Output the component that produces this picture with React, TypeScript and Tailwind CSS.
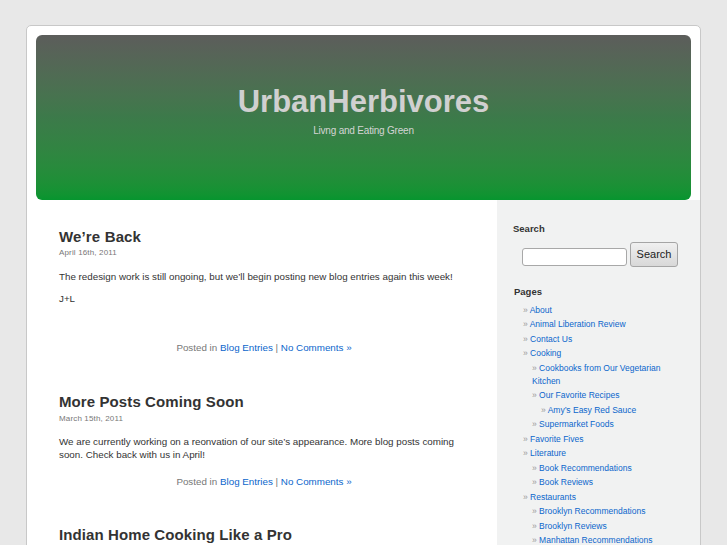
import React from "react";

type PageItem = { label: string; children?: PageItem[] };

const pages: PageItem[] = [
  { label: "About" },
  { label: "Animal Liberation Review" },
  { label: "Contact Us" },
  {
    label: "Cooking",
    children: [
      { label: "Cookbooks from Our Vegetarian Kitchen" },
      { label: "Our Favorite Recipes", children: [{ label: "Amy’s Easy Red Sauce" }] },
      { label: "Supermarket Foods" },
    ],
  },
  { label: "Favorite Fives" },
  {
    label: "Literature",
    children: [{ label: "Book Recommendations" }, { label: "Book Reviews" }],
  },
  {
    label: "Restaurants",
    children: [
      { label: "Brooklyn Recommendations" },
      { label: "Brooklyn Reviews" },
      { label: "Manhattan Recommendations" },
    ],
  },
];

function PageList({ items, nested }: { items: PageItem[]; nested?: boolean }) {
  return (
    <ul className={nested ? "ml-[9px] mt-[1.5px]" : "ml-[26px] mt-[5.5px]"}>
      {items.map((item) => (
        <li key={item.label} className="mb-[1.5px] text-[8.5px] leading-[13px]">
          <span className="text-[#999]">» </span>
          <a href="#" className="text-[#0b66cc]">
            {item.label}
          </a>
          {item.children && <PageList items={item.children} nested />}
        </li>
      ))}
    </ul>
  );
}

function PostMeta({ className }: { className: string }) {
  return (
    <p className={`text-center text-[9.8px] leading-[13px] text-[#777] ${className}`}>
      Posted in <a href="#" className="text-[#0b66cc]">Blog Entries</a> |{" "}
      <a href="#" className="text-[#0b66cc]">No Comments »</a>
    </p>
  );
}

export default function App() {
  return (
    <div
      className="h-[545px] w-full overflow-hidden bg-[#e8e8e8] pt-[25px] pl-[26px]"
      style={{ fontFamily: '"Liberation Sans", Arial, sans-serif' }}
    >
      <div className="w-[675px] rounded-[5px] border border-[#c8c8c8] bg-white">
        {/* header */}
        <div className="px-[9px] pt-[9px]">
          <div className="h-[165px] rounded-[6px] bg-linear-to-b from-[#5c5d5b] via-[#3c7a4a] to-[#06952f] pt-[49px] text-center">
            <h1 className="text-[31px] font-bold leading-[36px] text-[#d0d0d0]">UrbanHerbivores</h1>
            <p className="mt-[5px] text-[10px] leading-[12px] tracking-[-0.2px] text-[#d4d4d4]">
              Livng and Eating Green
            </p>
          </div>
        </div>

        <div className="flex">
          {/* posts */}
          <div className="w-[470px] pl-[32px] pr-[28px] pt-[28px] text-[#333]">
            <div>
              <h2 className="text-[15px] font-bold leading-[18px] tracking-[0.15px] text-[#333]">We’re Back</h2>
              <p className="mt-[2px] text-[8px] leading-[10px] tracking-[0.15px] text-[#777]">April 16th, 2011</p>
              <p className="mt-[11.5px] text-[9.8px] leading-[13px]">
                The redesign work is still ongoing, but we’ll begin posting new blog entries again this week!
              </p>
              <p className="mt-[9px] text-[9.8px] leading-[13px]">J+L</p>
              <PostMeta className="mt-[36px]" />
            </div>

            <div className="mt-[39.5px]">
              <h2 className="text-[15px] font-bold leading-[18px] tracking-[0.1px] text-[#333]">More Posts Coming Soon</h2>
              <p className="mt-[3px] text-[8px] leading-[10px] tracking-[0.15px] text-[#777]">March 15th, 2011</p>
              <p className="mt-[10.5px] text-[9.8px] leading-[13px]">
                We are currently working on a reonvation of our site’s appearance. More blog posts coming soon. Check
                back with us in April!
              </p>
              <PostMeta className="mt-[14px]" />
            </div>

            <div className="mt-[38.5px]">
              <h2 className="text-[15px] font-bold leading-[18px] tracking-[0.1px] text-[#333]">
                Indian Home Cooking Like a Pro
              </h2>
            </div>
          </div>

          {/* sidebar */}
          <div className="min-h-[400px] flex-1 bg-[#f1f2f2] pr-[20px] pt-[23px] text-[#333]">
            <h2 className="pl-[16px] text-[9.5px] font-bold leading-[12px]">Search</h2>
            <div className="mt-[7px] flex items-start pl-[25px]">
              <input
                type="text"
                className="mt-[6px] h-[18px] w-[105px] rounded-[3px] border border-[#a8a8a8] bg-white"
              />
              <button className="ml-[3px] h-[25px] w-[48px] rounded-[3px] border border-[#a5a5a5] bg-linear-to-b from-[#f0f0f0] to-[#d8d8d8] text-[11px] text-[#222]">
                Search
              </button>
            </div>
            <h2 className="mt-[19px] pl-[17px] text-[9.5px] font-bold leading-[12px]">Pages</h2>
            <PageList items={pages} />
          </div>
        </div>
      </div>
    </div>
  );
}
